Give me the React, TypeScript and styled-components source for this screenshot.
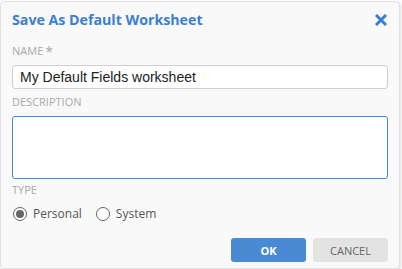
import React, { useState } from 'react'
import styled, { createGlobalStyle } from 'styled-components'

const GlobalStyle = createGlobalStyle`
  html, body {
    margin: 0;
    padding: 0;
    background: #ffffff;
  }
`

const Dialog = styled.div`
  box-sizing: border-box;
  width: 400px;
  height: 268px;
  margin-top: 1px;
  background: #f9f9f9;
  border: 1px solid #e2e2e2;
  border-radius: 4px;
  box-shadow: 1px 1px 2px rgba(0, 0, 0, 0.12);
  padding: 0 11px;
  display: flex;
  flex-direction: column;
  font-family: 'Open Sans', 'Noto Sans', sans-serif;
`

const Header = styled.div`
  height: 35px;
  display: flex;
  align-items: center;
  justify-content: space-between;
`

const Title = styled.h2`
  margin: 0;
  font-size: 14.2px;
  font-weight: 700;
  color: #3a7fd0;
`

const CloseButton = styled.button`
  border: none;
  background: none;
  padding: 0;
  margin-right: 1px;
  width: 12px;
  height: 12px;
  display: flex;
  cursor: pointer;
`

const Label = styled.label<{ $top: number }>`
  display: block;
  margin-top: ${props => props.$top}px;
  height: 14px;
  line-height: 14px;
  font-size: 11px;
  color: #a9a9a9;
  text-transform: uppercase;

  & span {
    font-size: 14px;
    vertical-align: -2px;
    margin-left: 2px;
  }
`

const TextInput = styled.input`
  box-sizing: border-box;
  margin-top: 7px;
  width: 376px;
  height: 24px;
  padding: 0 7px;
  border: 1px solid #cfcfcf;
  border-radius: 3px;
  background: #fff;
  font-family: 'Liberation Sans', Arial, sans-serif;
  font-size: 14px;
  color: #222;
  outline: none;
`

const TextArea = styled.textarea`
  box-sizing: border-box;
  margin-top: 7px;
  width: 376px;
  height: 63px;
  padding: 4px 6px;
  border: 1px solid #4a89d0;
  border-radius: 3px;
  background: #fff;
  resize: none;
  font-family: 'Liberation Sans', Arial, sans-serif;
  font-size: 14px;
  caret-color: #000;
  outline: none;
`

const RadioRow = styled.div`
  margin-top: 8px;
  display: flex;
  align-items: center;
  gap: 14px;
  padding-left: 1px;
`

const RadioOption = styled.label`
  display: flex;
  align-items: center;
  gap: 6px;
  font-size: 12px;
  color: #555;
  cursor: pointer;
`

const RadioCircle = styled.span<{ $checked: boolean }>`
  box-sizing: border-box;
  width: 14px;
  height: 14px;
  border-radius: 50%;
  border: 1px solid #666;
  background: #fff;
  display: flex;
  align-items: center;
  justify-content: center;

  &::after {
    content: '';
    width: 8px;
    height: 8px;
    border-radius: 50%;
    background: ${props => (props.$checked ? '#666' : 'transparent')};
  }
`

const Footer = styled.div`
  margin-top: 16px;
  display: flex;
  justify-content: flex-end;
  gap: 7px;
`

const Button = styled.button<{ $primary?: boolean }>`
  width: 75px;
  height: 24px;
  border: none;
  border-radius: 3px;
  background: ${props => (props.$primary ? '#4a8ad4' : '#e3e3e3')};
  color: ${props => (props.$primary ? '#fff' : '#666')};
  font-family: 'Open Sans', 'Noto Sans', sans-serif;
  font-size: 11px;
  font-weight: ${props => (props.$primary ? 700 : 400)};
  cursor: pointer;
`

const App = () => {
  const [type, setType] = useState('personal')

  return (
    <>
      <GlobalStyle />
      <Dialog>
        <Header>
          <Title>Save As Default Worksheet</Title>
          <CloseButton aria-label="Close">
            <svg width="12" height="12" viewBox="0 0 12 12">
              <path d="M2 2 L10 10 M10 2 L2 10" stroke="#3a7fd0" strokeWidth="3" strokeLinecap="square" />
            </svg>
          </CloseButton>
        </Header>

        <Label $top={7}>
          Name<span>*</span>
        </Label>
        <TextInput defaultValue="My Default Fields worksheet" />

        <Label $top={6}>Description</Label>
        <TextArea autoFocus />

        <Label $top={4}>Type</Label>
        <RadioRow>
          <RadioOption onClick={() => setType('personal')}>
            <RadioCircle $checked={type === 'personal'} />
            Personal
          </RadioOption>
          <RadioOption onClick={() => setType('system')}>
            <RadioCircle $checked={type === 'system'} />
            System
          </RadioOption>
        </RadioRow>

        <Footer>
          <Button $primary>OK</Button>
          <Button>CANCEL</Button>
        </Footer>
      </Dialog>
    </>
  )
}

export default App
